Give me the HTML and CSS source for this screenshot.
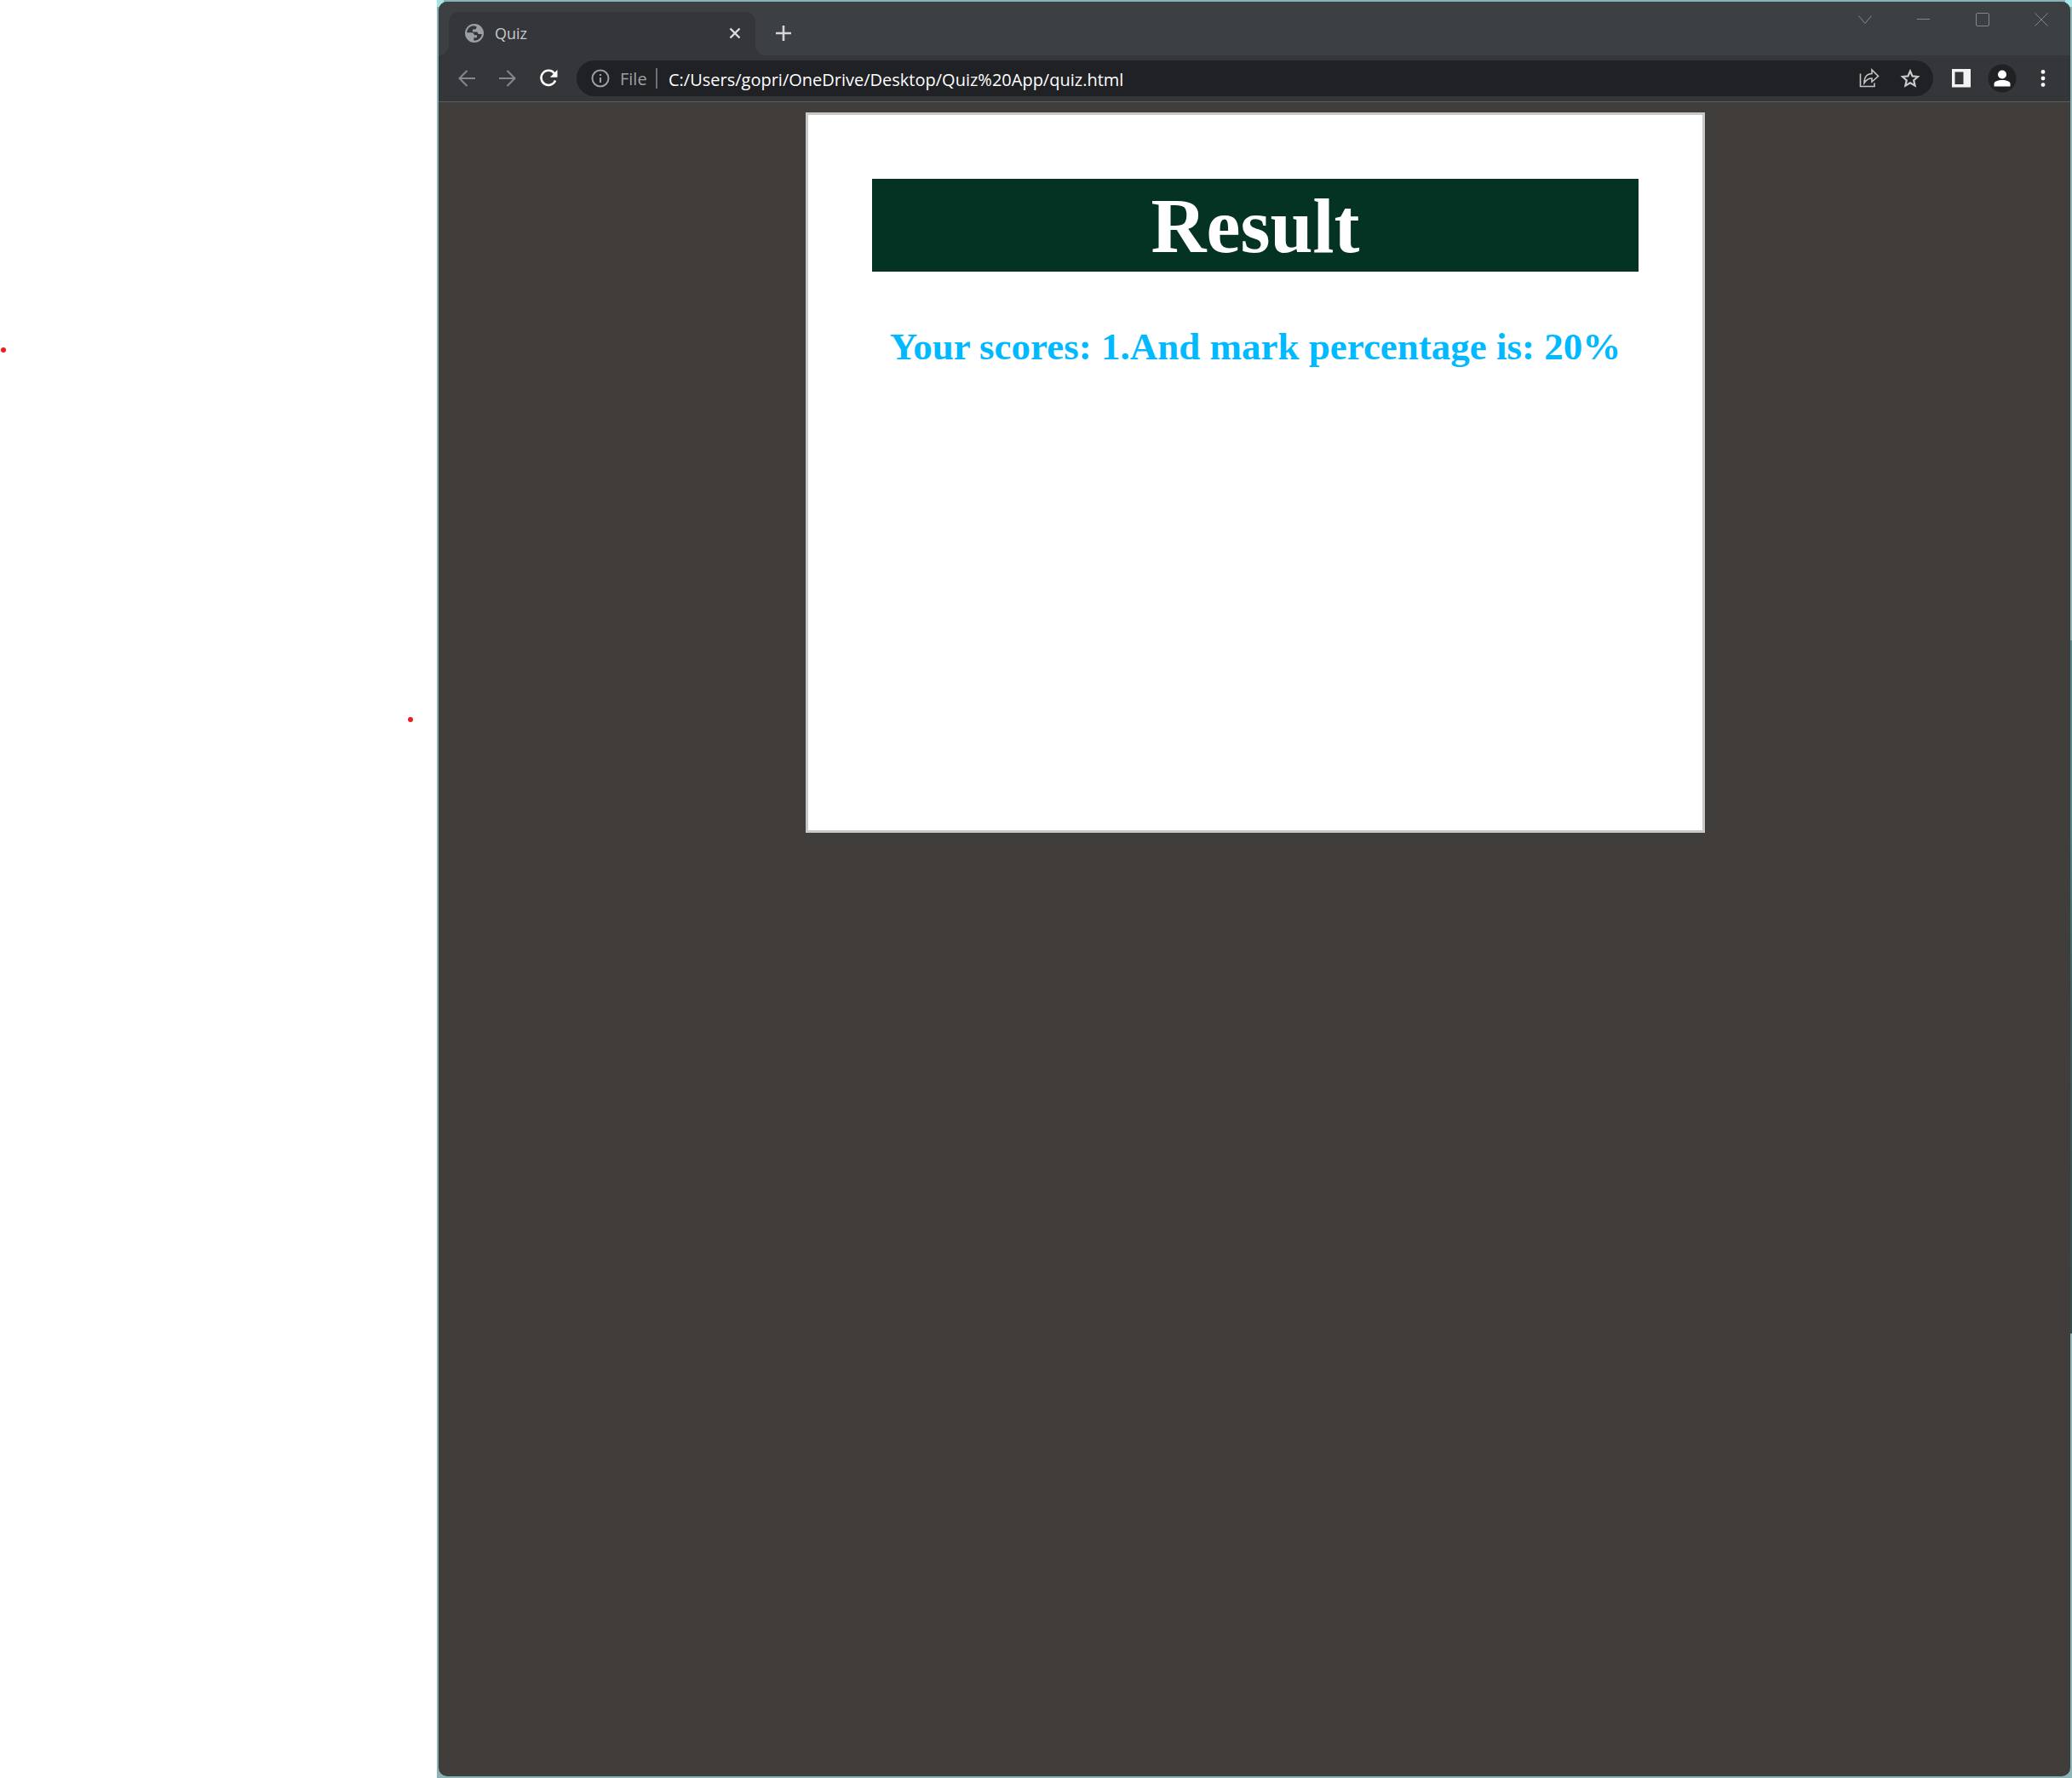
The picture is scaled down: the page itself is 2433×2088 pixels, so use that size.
FILE: index.html
```html
<!DOCTYPE html>
<html lang="en">
<head>
<meta charset="utf-8">
<title>Quiz</title>
<link rel="stylesheet" href="styles.css">
</head>
<body>
<div class="desktop">
  <div class="canvas">
    <span class="dot dot-edge"></span>
    <span class="dot dot-inner"></span>
  </div>
  <div class="frame">
    <div class="window">
      <header class="tabstrip">
        <div class="tab">
          <svg class="icon" width="24" height="24" viewBox="0 0 24 24"><circle cx="12" cy="12" r="11" fill="#9aa0a6"/><path d="M11 3.2C6.500 3.500 3.500 7 3.200 11.300H8.200Q11.500 11.300 12 14.300H15V17.200H11.400V20.700C16.500 21 20.500 17.200 20.800 13H17.500Q15.700 13 15.500 10.500H10V7.500H12.500Q14.700 7.200 14.500 4Z" fill="#35363a"/></svg>
          <span class="tab-title">Quiz</span>
          <button class="tab-close" aria-label="Close tab"><svg width="14" height="14" viewBox="0 0 14 14" fill="none" stroke="#dadce0" stroke-width="2.400"><path d="M1.500 1.500 12.500 12.500M12.500 1.500 1.500 12.500"/></svg></button>
        </div>
        <button class="new-tab" aria-label="New tab"><svg width="18" height="18" viewBox="0 0 18 18" fill="none" stroke="#d3d5d8" stroke-width="2.600"><path d="M9 0V18M0 9H18"/></svg></button>
        <div class="controls">
          <button aria-label="Search tabs"><svg width="16" height="16" viewBox="0 0 16 16"><path d="M.5 3.500 8 12.500 15.500 3.500"/></svg></button>
          <button aria-label="Minimize"><svg width="16" height="16" viewBox="0 0 16 16"><path d="M0 7.500H15"/></svg></button>
          <button aria-label="Maximize"><svg width="16" height="16" viewBox="0 0 16 16"><rect x=".5" y=".5" width="15" height="15" rx="1.500"/></svg></button>
          <button aria-label="Close"><svg width="16" height="16" viewBox="0 0 16 16"><path d="M.5.5 15.500 15.500M15.500.5.5 15.500"/></svg></button>
        </div>
      </header>
      <nav class="toolbar">
        <button class="tool" aria-label="Back"><svg width="20" height="20" viewBox="0 0 20 20" fill="none" stroke="#87888b" stroke-width="2"><path d="M20 10H2M10.500 1 1.500 10 10.500 19"/></svg></button>
        <button class="tool" aria-label="Forward"><svg width="20" height="20" viewBox="0 0 20 20" fill="none" stroke="#87888b" stroke-width="2"><path d="M0 10H18M9.500 1 18.500 10 9.500 19"/></svg></button>
        <button class="tool" aria-label="Reload"><svg width="22" height="22" viewBox="0 0 22 22"><path d="M18 5.200A8.600 8.600 0 1 0 19.100 13.500" fill="none" stroke="#fff" stroke-width="2.500"/><path d="M21.500 1V9.700H12.800Z" fill="#fff"/></svg></button>
        <div class="omnibox">
          <svg class="icon" width="24" height="24" viewBox="0 0 24 24" fill="none" stroke="#9aa0a6" stroke-width="2"><circle cx="12" cy="12" r="9.500"/><path d="M12 11V17M12 7V9"/></svg>
          <label class="scheme" for="url">File</label>
          <span class="divider"></span>
          <input class="url" id="url" type="text" value="C:/Users/gopri/OneDrive/Desktop/Quiz%20App/quiz.html">
          <button class="tool" aria-label="Share"><svg width="24" height="24" viewBox="0 0 24 24" fill="none" stroke="#c4c5c7" stroke-width="1.600"><path d="M1.500 6.500V21.500H18V17.500"/><path d="M6 17.500C6 10.500 9.500 6.500 15 6.500V2L22.500 9.500 15 16V12C11 12 8.500 13.500 6 17.500Z"/></svg></button>
          <button class="tool" aria-label="Bookmark"><svg width="24" height="24" viewBox="0 0 24 24" fill="none" stroke="#c9cacc" stroke-width="2.200"><path d="M12 3.500 14.600 9.400 21 10 16.200 14.300 17.600 20.600 12 17.300 6.400 20.600 7.800 14.300 3 10 9.400 9.400Z"/></svg></button>
        </div>
        <button class="tool" aria-label="Side panel"><svg width="22" height="22" viewBox="0 0 22 22"><path d="M0 0H22V21.500H0ZM3.500 3.500V18H13.500V3.500Z" fill="#f1f3f4" fill-rule="evenodd"/></svg></button>
        <button class="tool" aria-label="Profile"><svg width="34" height="34" viewBox="0 0 34 34"><circle cx="17" cy="17" r="16.500" fill="#202124"/><circle cx="17" cy="12.500" r="5" fill="#fff"/><path d="M7.500 26.500V23.500C7.500 20.500 12 19 17 19S26.500 20.500 26.500 23.500V26.500Z" fill="#fff"/></svg></button>
        <button class="tool" aria-label="Menu"><svg width="6" height="20" viewBox="0 0 6 20" fill="#fff"><circle cx="3" cy="2.400" r="2.400"/><circle cx="3" cy="10" r="2.400"/><circle cx="3" cy="17.600" r="2.400"/></svg></button>
      </nav>
      <main class="page">
        <section class="card">
          <h1 class="banner">Result</h1>
          <h2 class="score">Your scores: 1.And mark percentage is: 20%</h2>
        </section>
      </main>
    </div>
  </div>
</div>
</body>
</html>
```
FILE: styles.css
```css
* {
  box-sizing: border-box;
}

body {
  margin: 0;
  background: #fff;
  font-family: "Open Sans", "Noto Sans", sans-serif;
}

button {
  display: flex;
  align-items: center;
  justify-content: center;
  padding: 0;
  border: 0;
  background: none;
}

.icon {
  flex: none;
}

.desktop {
  display: grid;
  grid-template-columns: 513fr 1920fr;
  min-height: 100vh;
}

.canvas {
  position: relative;
}

.dot {
  position: absolute;
  width: 6px;
  height: 6px;
  border-radius: 50%;
  background: #ed1c24;
}

.dot-edge {
  left: 1px;
  top: 408px;
}

.dot-inner {
  left: 479px;
  top: 842px;
}

.frame {
  display: flex;
  padding: 2px;
  background:
    linear-gradient(#a6e6e6, #a6e6e6) left top / 8px 8px no-repeat,
    linear-gradient(#a6e6e6, #a6e6e6) right top / 8px 8px no-repeat,
    linear-gradient(#8ab4b5 36%, #558b8d 36%, #558b8d 46%, #3b5f60 57%, #324e4d 75%, #8ab4b5 75%) right top / 2px 100% no-repeat,
    #8ab4b5;
}

.window {
  display: flex;
  flex: 1;
  flex-direction: column;
  min-width: 0;
  border-radius: 10px;
  background: #413d3b;
  overflow: hidden;
}

.tabstrip {
  display: flex;
  height: 63px;
  padding-left: 12px;
  background: #3c4043;
}

.tab {
  position: relative;
  display: flex;
  align-items: center;
  width: 360px;
  margin-top: 12px;
  padding: 0 12px 2px 18px;
  border-radius: 12px 12px 0 0;
  background: #35363a;
}

.tab::before,
.tab::after {
  content: "";
  position: absolute;
  bottom: 0;
  width: 12px;
  height: 12px;
}

.tab::before {
  right: 100%;
  background: radial-gradient(circle at 0 0, transparent 12px, #35363a 12px);
}

.tab::after {
  left: 100%;
  background: radial-gradient(circle at 100% 0, transparent 12px, #35363a 12px);
}

.tab-title {
  flex: 1;
  margin-left: 12px;
  font-size: 18px;
  line-height: 24px;
  color: #c6c9cc;
}

.tab-close {
  width: 24px;
  height: 24px;
}

.new-tab {
  width: 42px;
  margin: 12px 0 0 12px;
  padding-bottom: 2px;
}

.controls {
  display: flex;
  height: 42px;
  margin-left: auto;
}

.controls button {
  width: 69px;
}

.controls svg {
  fill: none;
  stroke: #85888a;
}

.toolbar {
  display: flex;
  align-items: center;
  height: 55px;
  padding: 0 8px 0 9px;
  border-bottom: 1px solid #5b5c5f;
  background: #35363a;
}

.tool {
  flex: none;
  width: 48px;
  height: 42px;
}

.omnibox {
  display: flex;
  flex: 1;
  align-items: center;
  height: 42px;
  margin: 0 9px;
  padding: 0 3px 0 16px;
  border-radius: 21px;
  background: #202124;
}

.scheme {
  width: 42px;
  margin-left: 11px;
  padding-top: 2px;
  font-size: 20px;
  line-height: 28px;
  color: #9aa0a6;
}

.divider {
  width: 2px;
  height: 24px;
  background: #6b6e72;
}

.url {
  flex: 1;
  min-width: 0;
  height: 30px;
  margin-left: 13px;
  padding: 2px 0 0;
  border: 0;
  outline: 0;
  background: none;
  font: 20px/28px "Open Sans", "Noto Sans", sans-serif;
  color: #fff;
}

.page {
  flex: 1;
  padding: 12px 12px 12px 14px;
}

.card {
  max-width: 1056px;
  min-height: 846px;
  margin: 0 auto;
  padding: 75px;
  border: 3px solid #c8c8c8;
  background: #fff;
  font-family: "Liberation Serif", serif;
  text-align: center;
}

.banner {
  margin: 0;
  padding: 4px 0 2px;
  background: #043223;
  font-size: 90px;
  line-height: 103px;
  color: #fff;
}

.score {
  margin: 60px 0 0;
  font-size: 45px;
  line-height: 56px;
  color: #00b9ff;
}
```
